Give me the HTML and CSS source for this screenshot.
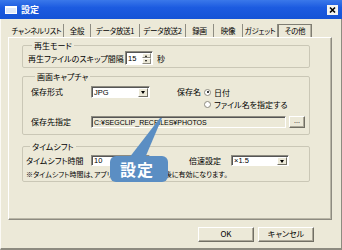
FILE: index.html
```html
<!DOCTYPE html>
<html lang="ja">
  <head>
    <meta charset="UTF-8" />
    <title>設定</title>
    <link rel="stylesheet" href="styles.css">
  </head>
  <body>
    <div class="window">
      <!-- title bar -->
      <div class="titlebar">
        <svg class="app-icon" width="12" height="8" viewBox="0 0 12 8">
          <rect x="0" y="0" width="12" height="8" fill="#fff" />
          <rect x="1" y="2" width="10" height="5" fill="#dfe8f8" />
        </svg>
        <span class="title">設定</span>
        <span class="close">
          <svg width="11" height="10" viewBox="0 0 11 10">
            <path d="M3 2.5 L8 7.5 M8 2.5 L3 7.5" stroke="#000" stroke-width="1.6" />
          </svg>
        </span>
      </div>

      <div class="frame">
        <!-- tabs -->
        <div class="tabs">
          <span class="tab">チャンネルリスト</span>
          <span class="tab">全般</span>
          <span class="tab">データ放送1</span>
          <span class="tab">データ放送2</span>
          <span class="tab">録画</span>
          <span class="tab">映像</span>
          <span class="tab">ガジェット</span>
          <span class="tab active">その他</span>
        </div>

        <div class="panel">
          <!-- 再生モード -->
          <fieldset class="group group-play">
            <legend>再生モード</legend>
            <div class="row">
              <span class="label">再生ファイルのスキップ間隔</span>
              <span class="field spin">
                <span class="value">15</span>
                <span class="spin-btns"><i class="up"></i><i class="down"></i></span>
              </span>
              <span class="unit">秒</span>
            </div>
          </fieldset>

          <!-- 画面キャプチャ -->
          <fieldset class="group group-capture">
            <legend>画面キャプチャ</legend>
            <div class="row row-top">
              <span class="label">保存形式</span>
              <span class="field select select-format">
                <span class="value">JPG</span>
                <span class="arrow"></span>
              </span>
              <span class="label name-label">保存名</span>
              <div class="radios">
                <div class="radio checked"><span class="dot"></span>日付</div>
                <div class="radio"><span class="dot"></span>ファイル名を指定する</div>
              </div>
            </div>
            <div class="row row-path">
              <span class="label">保存先指定</span>
              <span class="field path"><span class="value">C:¥SEGCLIP_RECFILES¥PHOTOS</span></span>
              <span class="browse">...</span>
            </div>
          </fieldset>

          <!-- タイムシフト -->
          <fieldset class="group group-shift">
            <legend>タイムシフト</legend>
            <div class="row">
              <span class="label">タイムシフト時間</span>
              <span class="field text-input"><span class="value">10</span></span>
              <span class="label speed-label">倍速設定</span>
              <span class="field select select-speed">
                <span class="value">×1.5</span>
                <span class="arrow"></span>
              </span>
            </div>
            <div class="note">※タイムシフト時間は、アプリケーション再起動後に有効になります。</div>
          </fieldset>
        </div>

        <div class="buttons">
          <span class="btn">OK</span>
          <span class="btn">キャンセル</span>
        </div>
      </div>

      <!-- callout -->
      <div class="callout">
        <svg width="64" height="70" viewBox="0 0 64 70">
          <path d="M21 42 L37 42 L54 2 L52 2 Z" fill="#5b8ec3" />
          <rect x="2" y="40" width="58" height="26" rx="6" fill="#5b8ec3" />
        </svg>
        <span class="callout-text">設定</span>
      </div>
    </div>
  </body>
</html>
```

FILE: styles.css
```css
* {
  box-sizing: border-box;
}

body {
  margin: 0;
  font-family: "Noto Sans CJK JP", sans-serif;
  font-size: 8px;
  line-height: 9px;
  color: #000;
  font-feature-settings: "palt";
}

.window {
  position: relative;
  width: 342px;
  height: 250px;
  background: #ece9d8;
  overflow: hidden;
}

/* title bar */
.titlebar {
  display: flex;
  align-items: center;
  height: 19px;
  padding: 0 4px 0 5px;
  background: linear-gradient(#3a78ea, #1c5be0 40%, #1553d6);
  color: #fff;
}

.app-icon {
  display: block;
}

.title {
  margin-left: 4px;
  font-size: 9px;
  font-weight: bold;
}

.close {
  display: flex;
  margin-left: auto;
  width: 11px;
  height: 10px;
  background: #f4f4f0;
}

/* frame */
.frame {
  height: 231px;
  padding: 5px 9px 0 7px;
  border-left: 1px solid #fbfaf5;
  border-right: 1px solid #8d8b80;
  border-bottom: 2px solid #8d8b80;
}

.tabs {
  display: flex;
  height: 13px;
  margin-left: 2px;
}

.tab {
  padding-top: 2px;
  line-height: 10px;
  font-size: 7.5px;
  letter-spacing: -0.3px;
  text-align: center;
  border-right: 1px solid #8f8d82;
  white-space: nowrap;
}

.tab:nth-child(1) { width: 54px; }
.tab:nth-child(2) { width: 27px; }
.tab:nth-child(3) { width: 49px; }
.tab:nth-child(4) { width: 46px; }
.tab:nth-child(5) { width: 28px; }
.tab:nth-child(6) { width: 29px; }
.tab:nth-child(7) { width: 35px; }

.tab.active {
  width: 34px;
  border: 1px solid #7f7d72;
  border-bottom: none;
  padding-top: 1px;
  box-shadow: inset -1px 0 0 #b5b2a3;
}

.panel {
  height: 183px;
  border: 1px solid #8d8b80;
  border-top-color: #fff;
  border-left-color: #fff;
  box-shadow: inset -1px -1px 0 #b9b6a6;
}

/* groups */
.group {
  width: 288px;
  margin: 0 0 0 13px;
  padding: 0;
  border: 1px solid #cac7b6;
  border-radius: 2px;
  min-width: 0;
}

.group legend {
  margin-left: 4px;
  padding: 0 2px;
  line-height: 9px;
}

.group-play {
  margin-top: 3px;
  padding: 1px 0 2px 5px;
}

.group-capture {
  margin-top: 4px;
  padding: 5px 0 6px 8px;
}

.group-shift {
  margin-top: 7px;
  padding: 4px 0 2px 3px;
}

.row {
  display: flex;
  align-items: center;
}

.row-top {
  align-items: flex-start;
}

.row-path {
  margin-top: 6px;
}

.label {
  white-space: nowrap;
}

.group-play .label {
  width: 97px;
}

.group-capture .label {
  width: 60px;
  line-height: 12px;
}

.group-capture .name-label {
  width: 26px;
  margin-left: 27px;
}

.group-shift .label {
  width: 65px;
}

.group-shift .speed-label {
  width: 42px;
  margin-left: 39px;
}

.unit {
  margin-left: 4px;
}

/* fields */
.field {
  display: flex;
  align-items: center;
  justify-content: space-between;
  background: #fff;
  border: 1px solid;
  border-color: #8d8b80 #fff #fff #8d8b80;
  box-shadow: inset 1px 1px 0 #555;
  font-family: "Liberation Sans", sans-serif;
  font-size: 7.5px;
}

.field .value {
  padding-left: 2px;
  white-space: nowrap;
}

.spin {
  width: 28px;
  height: 14px;
  padding-right: 1px;
}

.spin-btns {
  display: flex;
  flex-direction: column;
  width: 9px;
  height: 11px;
}

.spin-btns i {
  position: relative;
  flex: 1;
  background: #ece9d8;
  border: 1px solid;
  border-color: #fff #8d8b80 #8d8b80 #fff;
}

.spin-btns i::after {
  content: "";
  position: absolute;
  left: 2px;
  top: 1px;
  border-left: 1.5px solid transparent;
  border-right: 1.5px solid transparent;
}

.spin-btns .up::after {
  border-bottom: 2px solid #000;
}

.spin-btns .down::after {
  border-top: 2px solid #000;
}

.select {
  height: 12px;
  padding-right: 1px;
}

.select-format {
  width: 59px;
}

.select-speed {
  width: 58px;
  height: 11px;
}

.arrow {
  position: relative;
  width: 10px;
  height: 9px;
  background: #ece9d8;
  border: 1px solid;
  border-color: #fff #716f64 #716f64 #fff;
}

.select-speed .arrow {
  height: 8px;
}

.arrow::after {
  content: "";
  position: absolute;
  left: 2px;
  top: 2px;
  border-left: 2.5px solid transparent;
  border-right: 2.5px solid transparent;
  border-top: 3px solid #000;
}

.text-input {
  width: 59px;
  height: 11px;
}

.path {
  width: 195px;
  height: 12px;
  background: #ece9d8;
  font-size: 7px;
}

.browse {
  width: 16px;
  height: 12px;
  margin-left: 3px;
  text-align: center;
  line-height: 8px;
  font-family: "Liberation Sans", sans-serif;
  font-size: 7px;
  background: #ece9d8;
  border: 1px solid;
  border-color: #fff #716f64 #716f64 #fff;
  box-shadow: inset -1px -1px 0 #aca899;
}

/* radios */
.radios {
  display: flex;
  flex-direction: column;
}

.radio {
  display: flex;
  align-items: center;
  height: 12px;
  white-space: nowrap;
}

.radio .dot {
  position: relative;
  width: 7px;
  height: 7px;
  margin: 0 3px 0 1px;
  border: 1px solid #8d8b80;
  border-radius: 50%;
  background: #fff;
}

.radio.checked .dot::after {
  content: "";
  position: absolute;
  left: 1.5px;
  top: 1.5px;
  width: 2px;
  height: 2px;
  border-radius: 50%;
  background: #000;
}

.note {
  margin-top: 4px;
  font-size: 7px;
  white-space: nowrap;
}

/* bottom buttons */
.buttons {
  display: flex;
  justify-content: flex-end;
  gap: 4px;
  margin-top: 7px;
  padding-right: 18px;
}

.btn {
  width: 56px;
  height: 15px;
  line-height: 12px;
  text-align: center;
  background: #ece9d8;
  border: 1px solid;
  border-color: #fff #716f64 #716f64 #fff;
  box-shadow: inset -1px -1px 0 #aca899;
}

/* callout */
.callout {
  position: absolute;
  left: 108px;
  top: 116px;
  width: 64px;
  height: 70px;
}

.callout svg {
  display: block;
}

.callout-text {
  position: absolute;
  left: 2px;
  top: 40px;
  width: 58px;
  height: 26px;
  padding-right: 4px;
  display: flex;
  align-items: center;
  justify-content: center;
  color: #fff;
  font-size: 16px;
  font-weight: bold;
  letter-spacing: 1px;
}
```
